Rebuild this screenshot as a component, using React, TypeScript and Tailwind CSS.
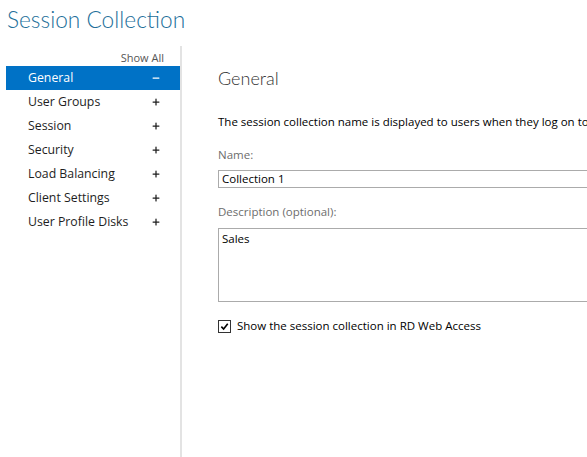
import { Minus, Plus } from "lucide-react";

const sections = [
  "General",
  "User Groups",
  "Session",
  "Security",
  "Load Balancing",
  "Client Settings",
  "User Profile Disks",
];

export default function App() {
  return (
    <div
      className="relative h-[457px] w-[587px] overflow-hidden bg-white text-black"
      style={{ fontFamily: "'Open Sans', 'Noto Sans', sans-serif" }}
    >
      <h1
        className="pl-[7px] pt-[4px] text-[22.7px] font-light leading-[32px] text-[#236f9a]"
        style={{ fontFamily: "Lato, sans-serif" }}
      >
        Session Collection
      </h1>

      <div className="mt-[10px] flex h-[411px]">
        {/* left nav */}
        <div className="ml-[6px] w-[174px] shrink-0 pt-[4px]">
          <div className="pr-[16px] text-right text-[11px] leading-[16px] text-[#555]">
            Show All
          </div>
          <ul>
            {sections.map((s, i) => (
              <li
                key={s}
                className={
                  i === 0
                    ? "flex h-[24px] items-center justify-between bg-[#0072c6] pl-[22px] pr-[19px] text-[12.3px] text-white"
                    : "flex h-[24px] items-center justify-between pl-[22px] pr-[19px] text-[12.3px] text-[#1e1e1e]"
                }
              >
                <span>{s}</span>
                {i === 0 ? (
                  <Minus className="h-[10px] w-[10px]" strokeWidth={3} />
                ) : (
                  <Plus className="h-[10px] w-[10px]" strokeWidth={3} />
                )}
              </li>
            ))}
          </ul>
        </div>

        <div className="w-[2px] shrink-0 bg-[#e3e3e3]" />

        {/* content */}
        <div className="min-w-0 flex-1 pl-[36px] text-[11.5px]">
          <h2
            className="mt-[19px] text-[18px] font-light leading-[26px] text-[#333]"
            style={{ fontFamily: "Lato, sans-serif" }}
          >
            General
          </h2>
          <p className="mt-[23px] whitespace-nowrap leading-[16px]">
            The session collection name is displayed to users when they log on to RD Web Access.
          </p>
          <div className="mt-[17px] leading-[16px] text-[#6d6d6d]">Name:</div>
          <div className="mt-[7px] h-[18px] w-[400px] border border-[#ababab] px-[3px] leading-[16px]">
            Collection 1
          </div>
          <div className="mt-[16px] leading-[16px] text-[#6d6d6d]">Description (optional):</div>
          <div className="mt-[8px] h-[74px] w-[400px] border border-[#ababab] px-[3px] pt-[2px] leading-[16px]">
            Sales
          </div>
          <label className="mt-[16px] flex items-center gap-[6px] leading-[16px]">
            <span className="flex h-[13px] w-[13px] items-center justify-center border border-[#333] bg-white">
              <svg viewBox="0 0 10 10" className="h-[9px] w-[9px]">
                <path d="M1.5 5.2 L4 7.8 L8.6 2" fill="none" stroke="#000" strokeWidth="1.8" />
              </svg>
            </span>
            Show the session collection in RD Web Access
          </label>
        </div>
      </div>
    </div>
  );
}
